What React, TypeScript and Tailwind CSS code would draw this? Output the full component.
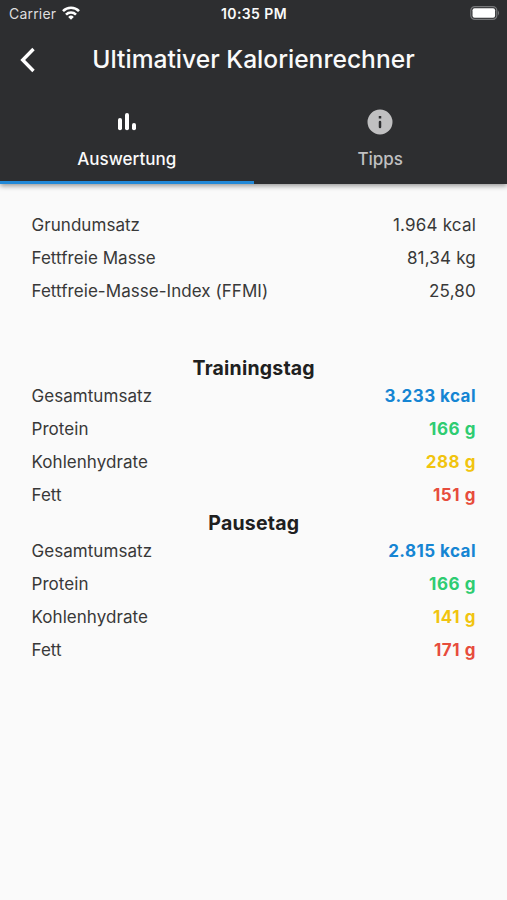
type RowProps = { label: string; value: string; valueClass?: string };

function Row({ label, value, valueClass = "text-[#383838] tracking-[0.2px]" }: RowProps) {
  return (
    <div className="flex h-[33px] items-center justify-between text-[17px]">
      <span className="tracking-[0.05px] text-[#383838]">{label}</span>
      <span className={valueClass}>{value}</span>
    </div>
  );
}

const macros = [
  { label: "Gesamtumsatz", valueClass: "text-[#1585d3] font-bold tracking-[0.45px]" },
  { label: "Protein", valueClass: "text-[#2ecc71] font-bold tracking-[0.55px]" },
  { label: "Kohlenhydrate", valueClass: "text-[#f1c40f] font-bold tracking-[0.55px]" },
  { label: "Fett", valueClass: "text-[#e74c3c] font-bold tracking-[0.55px]" },
];

function Day({ title, values }: { title: string; values: string[] }) {
  return (
    <section>
      <h2 className="h-[23px] text-center text-[19.5px] font-bold leading-[23px] tracking-[0.2px] text-[#202020]">{title}</h2>
      {macros.map((m, i) => (
        <Row key={m.label} label={m.label} value={values[i]} valueClass={m.valueClass} />
      ))}
    </section>
  );
}

export default function App() {
  return (
    <div className="flex h-[900px] w-[507px] flex-col overflow-hidden bg-[#fafafa] font-['Inter',sans-serif]">
      <header className="h-[184px] shrink-0 bg-[#2d2e30] text-[#fafafa] shadow-[0_2px_5px_rgba(0,0,0,0.4)]">
        <div className="grid h-[27px] grid-cols-3 items-center pl-[9px] pr-[7px] text-[14px]">
          <div className="flex items-center gap-1.5">
            <span className="tracking-[0.2px] text-[#dededf]">Carrier</span>
            <svg className="-mt-[2px]" width="18" height="14" viewBox="0 0 18 14" fill="none" stroke="white" strokeWidth="2.6">
              <path d="M1 5.1a11.3 11.3 0 0 1 16 0M4 8.6a7 7 0 0 1 10 0" />
              <path d="M6.2 10.9a4 4 0 0 1 5.6 0L9 13.8z" fill="white" stroke="none" />
            </svg>
          </div>
          <span className="-ml-[1px] text-center font-semibold tracking-[0.4px]">10:35 PM</span>
          <svg className="-mt-px justify-self-end" width="30" height="14" viewBox="0 0 30 14">
            <rect x=".8" y=".6" width="26" height="12.8" rx="4" fill="none" stroke="#77787a" strokeWidth="1.2" />
            <rect x="2.5" y="2.3" width="22.6" height="9.4" rx="2" fill="white" />
            <path d="M28 4.5q2 2.5 0 5z" fill="#77787a" />
          </svg>
        </div>
        <div className="grid h-[66px] grid-cols-[56px_1fr_56px] items-center">
          <svg className="ml-[20px]" width="16" height="26" viewBox="0 0 16 26" fill="none" stroke="white" strokeWidth="3.4">
            <path d="M13.5 2L2.7 13l10.8 11" />
          </svg>
          <h1 className="whitespace-nowrap pb-px text-center text-[24.6px] font-medium">Ultimativer Kalorienrechner</h1>
        </div>
        <nav className="grid h-[91px] grid-cols-2 text-[17px] font-medium">
          <div className="flex flex-col items-center border-b-[3px] border-[#2389d7] pt-[14px]">
            <svg width="30" height="30" viewBox="0 0 30 30" fill="white">
              <rect x="6" y="11" width="4" height="12.2" rx="2" />
              <rect x="13" y="6" width="4" height="17.2" rx="2" />
              <rect x="20" y="16" width="4" height="7.2" rx="2" />
            </svg>
            <span className="mt-[9px] leading-[26px]">Auswertung</span>
          </div>
          <div className="flex flex-col items-center pt-[14px] text-[#c0c0c1]">
            <svg width="30" height="30" viewBox="0 0 24 24" fill="currentColor">
              <path
                fillRule="evenodd"
                d="M12 2a10 10 0 1 0 0 20 10 10 0 0 0 0-20zM11 12a1 1 0 0 1 2 0v4a1 1 0 0 1-2 0zM11 7.2h2v2h-2z"
              />
            </svg>
            <span className="mt-[9px] leading-[26px]">Tipps</span>
          </div>
        </nav>
      </header>
      <main className="pl-[31.5px] pr-[31px] pt-[25px]">
        <Row label="Grundumsatz" value="1.964 kcal" />
        <Row label="Fettfreie Masse" value="81,34 kg" />
        <Row label="Fettfreie-Masse-Index (FFMI)" value="25,80" />
        <div className="mt-[49px]">
          <Day title="Trainingstag" values={["3.233 kcal", "166 g", "288 g", "151 g"]} />
          <Day title="Pausetag" values={["2.815 kcal", "166 g", "141 g", "171 g"]} />
        </div>
      </main>
    </div>
  );
}
